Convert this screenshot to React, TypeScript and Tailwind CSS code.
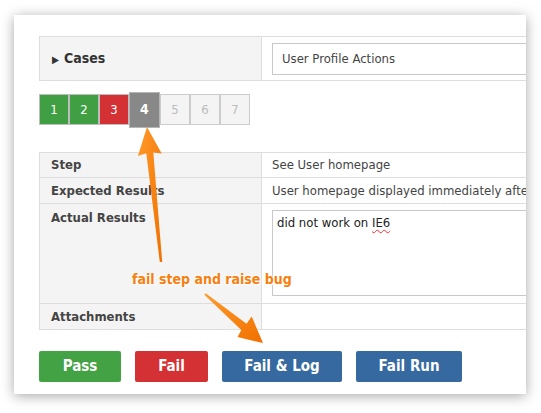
import React from 'react'

const steps = [
  { n: 1, cls: 'bg-[#3f9f42] text-white border-[#bdbdbd]' },
  { n: 2, cls: 'bg-[#3f9f42] text-white border-[#bdbdbd]' },
  { n: 3, cls: 'bg-[#d33134] text-white border-[#bdbdbd]' },
  { n: 4, cls: 'bg-[#888888] text-white border-[#b5b5b5] font-bold text-[14px] h-[36px] w-[31px] -my-[2px]' },
  { n: 5, cls: 'bg-[#f4f4f4] text-[#bcbcbc] border-[#cccccc]' },
  { n: 6, cls: 'bg-[#f4f4f4] text-[#bcbcbc] border-[#cccccc]' },
  { n: 7, cls: 'bg-[#f4f4f4] text-[#bcbcbc] border-[#cccccc]' },
]

const buttons = [
  { label: 'Pass', cls: 'w-[82px] bg-[#43a244]' },
  { label: 'Fail', cls: 'w-[73px] bg-[#d33134]' },
  { label: 'Fail & Log', cls: 'w-[120px] bg-[#36699f]' },
  { label: 'Fail Run', cls: 'w-[106px] bg-[#36699f]' },
]

function Arrows() {
  return (
    <svg className="absolute left-0 top-0 pointer-events-none" width="541" height="413">
      <defs>
        <linearGradient id="og" x1="0" y1="0" x2="1" y2="1">
          <stop offset="0" stopColor="#ff9a2a" />
          <stop offset="1" stopColor="#f07000" />
        </linearGradient>
      </defs>
      {/* arrow pointing at step 4 */}
      <polygon
        points="147,127 161.7,153.5 153.3,152.5 162.2,261.9 159.8,262.1 146.3,153.3 137.9,156"
        fill="url(#og)"
      />
      {/* arrow pointing at Fail & Log */}
      <polygon
        points="263,343 251.7,316.5 246.5,323.8 205.6,293.2 204.4,294.8 241.3,330 237.5,337.1"
        fill="url(#og)"
      />
    </svg>
  )
}

export default function App() {
  return (
    <div className="relative w-[541px] h-[413px] bg-white overflow-hidden font-[family-name:'DejaVu_Sans_Condensed','DejaVu_Sans',sans-serif] text-[13px] text-[#444]">
      <div className="ml-[14px] mt-[15px] w-[512px] h-[379px] bg-white shadow-[0_2px_12px_rgba(0,0,0,0.35)] overflow-hidden pl-[25px] pt-[21px]">
        {/* cases row */}
        <div className="flex w-[560px] h-[45px] border border-[#dddddd]">
          <div className="w-[222px] bg-[#f4f4f4] border-r border-[#dddddd] flex items-center pl-[12px] font-bold text-[14px] text-[#333]">
            <span className="text-[10px] mr-[5px] mt-[2px]">▶</span>Cases
          </div>
          <div className="flex-1 flex items-center pl-[10px]">
            <div className="w-full h-[32px] border border-[#c8c8c8] flex items-center pl-[9px] text-[#444]">
              User Profile Actions
            </div>
          </div>
        </div>

        {/* step pager */}
        <div className="flex items-center mt-[13px] h-[31px]">
          {steps.map((s) => (
            <div
              key={s.n}
              className={`w-[30px] h-[31px] border flex items-center justify-center text-[13px] ${s.cls}`}
            >
              {s.n}
            </div>
          ))}
        </div>

        {/* step details */}
        <div className="mt-[27px] w-[560px] border border-[#dddddd]">
          <div className="flex h-[25px] border-b border-[#dddddd]">
            <div className="w-[222px] shrink-0 bg-[#f4f4f4] border-r border-[#dddddd] pl-[11px] flex items-center font-bold text-[#444]">Step</div>
            <div className="pl-[10px] flex items-center">See User homepage</div>
          </div>
          <div className="flex h-[26px] border-b border-[#dddddd]">
            <div className="w-[222px] shrink-0 bg-[#f4f4f4] border-r border-[#dddddd] pl-[11px] flex items-center font-bold text-[#444]">Expected Results</div>
            <div className="pl-[10px] flex items-center whitespace-nowrap">User homepage displayed immediately after login</div>
          </div>
          <div className="flex h-[100px] border-b border-[#dddddd]">
            <div className="w-[222px] shrink-0 bg-[#f4f4f4] border-r border-[#dddddd] pl-[11px] pt-[4px] font-bold text-[#444]">Actual Results</div>
            <div className="flex-1 pl-[10px] pt-[6px]">
              <div className="h-[86px] border border-[#c8c8c8] pl-[4px] pt-[2px] text-[#222]">
                did not work on <span className="underline decoration-wavy decoration-red-500 decoration-1 underline-offset-2">IE6</span>
              </div>
            </div>
          </div>
          <div className="flex h-[25px]">
            <div className="w-[222px] shrink-0 bg-[#f4f4f4] border-r border-[#dddddd] pl-[11px] flex items-center font-bold text-[#444]">Attachments</div>
            <div className="flex-1" />
          </div>
        </div>

        {/* actions */}
        <div className="flex gap-[14px] mt-[21px]">
          {buttons.map((b) => (
            <div
              key={b.label}
              className={`h-[31px] rounded-[2px] flex items-center justify-center text-white font-bold text-[15px] ${b.cls}`}
            >
              {b.label}
            </div>
          ))}
        </div>
      </div>

      <Arrows />
      <div className="absolute left-[132px] top-[269px] font-bold text-[14px] text-[#f77f0f] whitespace-nowrap [text-shadow:0_0_2px_#fff,0_0_3px_#fff,1px_1px_2px_#fff]">
        fail step and raise bug
      </div>
    </div>
  )
}
